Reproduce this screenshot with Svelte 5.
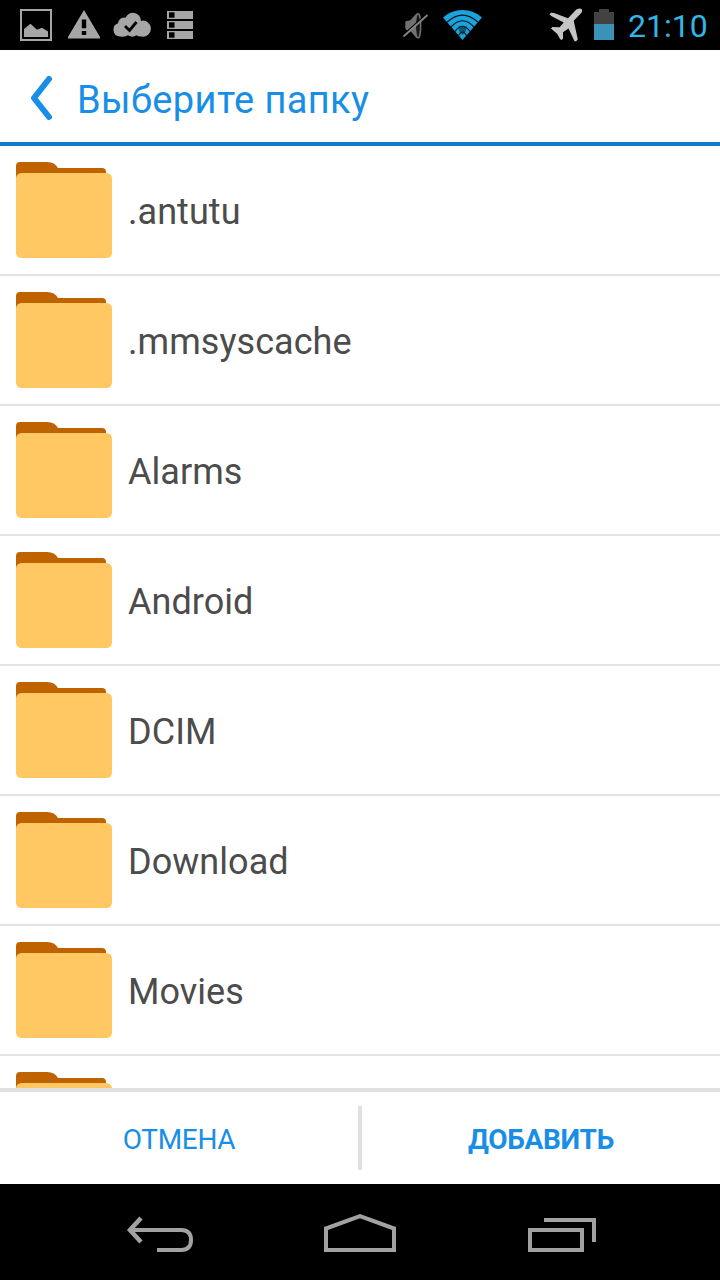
<script>
  // the last row is only partly in view, its label is below the fold
  const folders = ['.antutu', '.mmsyscache', 'Alarms', 'Android', 'DCIM', 'Download', 'Movies', ''];
</script>

<div class="screen">
  <div class="status">
    <!-- notifications -->
    <svg class="left" width="200" height="50" viewBox="0 0 200 50" fill="#a6a6a6">
      <rect x="21" y="10" width="30" height="30" fill="none" stroke="#a6a6a6" stroke-width="2" />
      <path d="M24 37v-8l6.5-5.3 6.5 6.1 5-2 6 3.700V37z" />
      <path fill-rule="evenodd" d="M84 10l16 27v1.500H68V37zM81.800 19.500v8.700h4.400v-8.700zM81.800 31v4h4.400v-4z" />
      <path d="M120.500 36.500a6.800 6.800 0 0 1-2-13.200a6.200 6.200 0 0 1 7.500-5.600a8 8 0 0 1 15.400 3.200a8 8 0 1 1 .6 15.600q-3 .2-5-1.200q-4 2.800-8.500 0q-3 2-8 1.200z" transform="translate(-.500 0)" />
      <path d="M125 26l4.500 4.500 7-8.500" fill="none" stroke="#000" stroke-width="2.800" />
      {#each [11, 21, 31] as y}
        <rect x="167" {y} width="26" height="8" />
        <rect x="169" y={y + 1.3} width="5.500" height="5.400" fill="#000" />
      {/each}
    </svg>
    <!-- sound, wifi, flight mode, battery -->
    <svg class="right" width="220" height="50" viewBox="400 0 220 50">
      <path d="M405.300 21.500q2-1 4.700-1l6-6.500 2 0v24l-2-.5-6-7h-3q-1.700-1-1.700-3z" fill="#717171" />
      <ellipse cx="418" cy="25.800" rx="2.700" ry="12.300" fill="#161616" stroke="#717171" stroke-width="1.500" />
      <path d="M402.500 35.500L426.500 14" stroke="#000" stroke-width="1.200" />
      <path d="M403.500 36.500L427.500 15" stroke="#858585" stroke-width="1.800" />
      <path d="M462.500 40L443 17.500Q451 10 462.500 10T482 17.500z" fill="#1aa3dc" />
      <path d="M458 26.500h9l-1.500 5.500-3 3-3-3z" fill="#0d5875" />
      <g fill="none" stroke="#04131a" stroke-width="1.200">
        <path d="M447 22.300q15.500-14.500 31 0" />
        <path d="M451 27q11.500-12.500 23 0" />
        <path d="M455 31.500q7.500-10.500 15 0" />
        <path d="M458.500 35.500q4-7 8 0" />
      </g>
      <path d="M549.500 14.200l1.500-1.400 3 .2 14 5.300 8.300-8.800q4-1.500 5.200-.5 1.300 1.300.2 3.500l-8 8.200 4.100 18.500-1.800 2.300-1.600-.5-5.900-12.500-5.500 3.800v6.400l-1.500 1.200-1.500-1-2.700-5-6.300-5.400 1.300-1.500 7.400.300 4-4.800-12.500-6.500z" fill="#c4c4c4" />
      <path d="M594 24V12h5V9h10v3h5v12z" fill="#424242" />
      <path d="M594 24h20v16h-20z" fill="#3993b9" />
    </svg>
    <span class="clock">21:10</span>
  </div>

  <header>
    <svg width="24" height="48" viewBox="0 0 24 48">
      <path d="M20 5L5 24l15 19" />
    </svg>
    <h1>Выберите папку</h1>
  </header>

  <ul>
    {#each folders as name}
      <li>
        <svg width="96" height="96" viewBox="0 0 96 96">
          <path d="M0 20V4q0-4 4-4h27q8 0 11 6h44q4 0 4 4v10z" fill="#bf6300" />
          <rect y="11" width="96" height="85" rx="5.500" fill="#ffc862" />
        </svg>
        {#if name}<span>{name}</span>{/if}
      </li>
    {/each}
  </ul>

  <footer>
    <button>ОТМЕНА</button>
    <i></i>
    <button class="add">ДОБАВИТЬ</button>
  </footer>

  <nav>
    <svg width="720" height="96" viewBox="0 1184 720 96" fill="none" stroke="#a2a2a2" stroke-width="4">
      <path d="M131 1230h50q10 0 10 10t-10 10h-24" />
      <path d="M141 1218l-11 12 11 12" stroke-width="4.500" />
      <path d="M326 1250v-21.500l34-12.300 34 12.300V1250z" />
      <path d="M530 1230h52v20h-52zM544 1220h50v22" />
    </svg>
  </nav>
</div>

<style>
  :global(body) {
    margin: 0;
    background: #000;
  }

  .screen {
    display: flex;
    flex-direction: column;
    width: 720px;
    height: 1280px;
    overflow: hidden;
    background: #fff;
    font-family: Roboto, "Noto Sans", sans-serif;
  }

  svg {
    display: block;
    flex: none;
  }

  .status {
    display: flex;
    height: 50px;
    background: #000;
  }

  .right {
    margin-left: 200px;
  }

  .clock {
    margin-left: 8px;
    font-size: 32px;
    line-height: 52px;
    color: #33b5e5;
    white-space: nowrap;
  }

  header {
    display: flex;
    align-items: center;
    box-sizing: border-box;
    height: 96px;
    padding-left: 29px;
    border-bottom: 4px solid #147bc9;
    color: #198ee6;
  }

  header svg {
    margin-top: 4px;
    fill: none;
    stroke: #198ee6;
    stroke-width: 6;
    stroke-linecap: round;
    stroke-linejoin: round;
  }

  h1 {
    margin: 8px 0 0 24px;
    font-size: 38px;
    font-weight: 400;
    line-height: 46px;
    letter-spacing: 0.38px;
    white-space: nowrap;
  }

  ul {
    flex: 1;
    min-height: 0;
    margin: 0;
    padding: 0;
    overflow: hidden;
    list-style: none;
  }

  li {
    display: flex;
    align-items: center;
    box-sizing: border-box;
    height: 130px;
    padding-left: 16px;
    border-bottom: 2px solid #e3e3e3;
  }

  li span {
    margin: 4px 0 0 16px;
    font-size: 36px;
    line-height: 44px;
    letter-spacing: 0.05px;
    color: #4c4c4c;
  }

  footer {
    display: flex;
    align-items: center;
    box-sizing: border-box;
    height: 96px;
    border-top: 4px solid #e0e0e0;
  }

  footer i {
    width: 4px;
    height: 64px;
    background: #e0e0e0;
  }

  button {
    flex: 1;
    padding: 3px 0 0;
    border: 0;
    background: none;
    color: #198ee6;
    font: 400 28px/34px Roboto, "Noto Sans", sans-serif;
    letter-spacing: -0.3px;
  }

  .add {
    font-weight: 700;
  }

  nav {
    height: 96px;
    background: #000;
  }
</style>
